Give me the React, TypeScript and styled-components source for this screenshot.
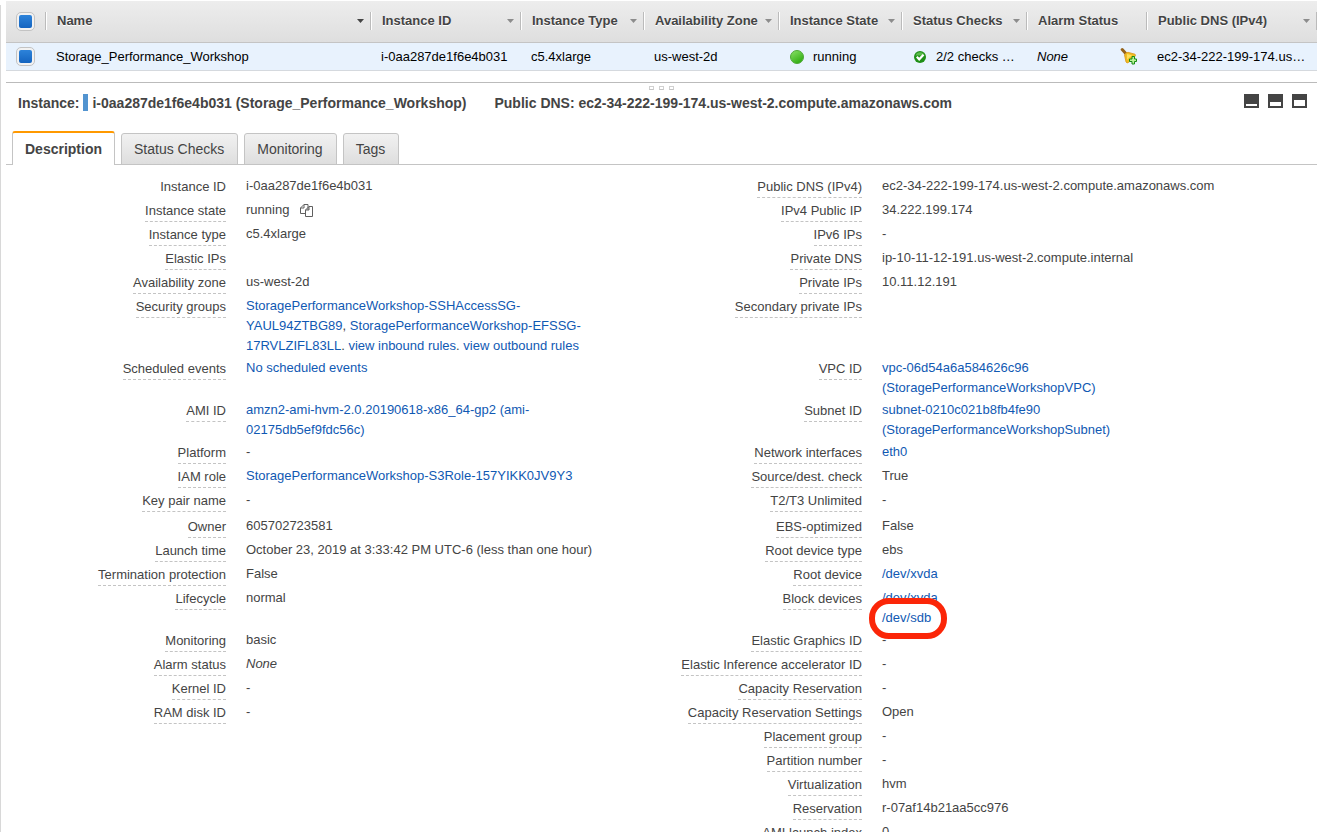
import React from "react";
import styled, { createGlobalStyle, css } from "styled-components";

const GlobalStyle = createGlobalStyle`
  * { box-sizing: border-box; }
  body {
    margin: 0;
    background: #fff;
    color: #444;
    font: 13px/20px "Liberation Sans", Arial, sans-serif;
  }
  button, input { font: inherit; color: inherit; }
`;

const Console = styled.main`
  position: relative;
  height: 100vh;
  overflow: hidden;
  padding: 1px 2px 0 6px;
  &::before {
    content: "";
    position: absolute;
    top: 5px;
    bottom: 0;
    left: 0;
    border-left: 1px solid #d8d8d8;
  }
`;

const InstanceTable = styled.table`
  width: 100%;
  table-layout: fixed;
  border-collapse: separate;
  border-spacing: 0;
`;

const Col = styled.col<{ $width?: number }>`
  ${(p) => p.$width && css`width: ${p.$width}px;`}
`;

const HeadRow = styled.tr`
  height: 42px;
  background: linear-gradient(#ededed, #dedede);
`;

const HeadCell = styled.th`
  padding: 0;
  border-bottom: 1px solid #c4c4c4;
  text-align: left;
  vertical-align: top;
`;

const HeadInner = styled.div`
  display: flex;
  align-items: center;
  height: 18px;
  margin-top: 11px;
  padding-left: 10px;
  border-right: 1px solid #bbb;
  box-shadow: 1px 0 #fff;
`;

const SortButton = styled.button`
  display: flex;
  flex: 1;
  align-items: center;
  justify-content: space-between;
  padding: 0 6px 0 1px;
  border: 0;
  background: none;
  font-weight: bold;
  line-height: 18px;
  text-align: left;
  text-shadow: 0 1px #fff;
  white-space: nowrap;
`;

const SelectedRow = styled.tr`
  height: 28px;
  background: #e8f2fd;
  color: #000;
`;

const Cell = styled.td<{ $italic?: boolean }>`
  padding: 0 10px;
  border-bottom: 1px solid #d5d9de;
  line-height: 26px;
  white-space: nowrap;
  overflow: hidden;
  text-overflow: ellipsis;
  font-style: ${(p) => (p.$italic ? "italic" : "normal")};
`;

const CellInner = styled.div<{ $gap?: number }>`
  display: flex;
  align-items: center;
  gap: ${(p) => p.$gap ?? 0}px;
  justify-content: ${(p) => (p.$gap ? "flex-start" : "space-between")};
`;

const CheckBox = styled.input`
  appearance: none;
  display: block;
  width: 19px;
  height: 19px;
  margin: 0;
  padding: 2px;
  border: 1px solid #c3c3c3;
  border-radius: 5px;
  background: linear-gradient(#f2f2f2, #f2f2f2) padding-box;
  &:checked {
    background:
      linear-gradient(#2d83da, #1464c0) content-box,
      linear-gradient(#f2f2f2, #f2f2f2) padding-box;
  }
`;

const Splitter = styled.div`
  display: flex;
  justify-content: center;
  gap: 5px;
  height: 10px;
  margin-top: 11px;
  padding-top: 3px;
  border-top: 1px solid #bbb;
`;

const Grip = styled.span`
  width: 5px;
  height: 4px;
  border: 1px solid #d0d0d0;
  border-bottom-color: #c4c4c4;
`;

const DetailHeader = styled.header`
  display: flex;
  align-items: center;
  padding: 1px 10px 0 12px;
  height: 20px;
`;

const Heading = styled.h2`
  display: flex;
  align-items: center;
  margin: 0;
  font-size: 14px;
  line-height: 20px;
  white-space: nowrap;
`;

const HeadingPart = styled.span`
  margin-right: 28px;
`;

const Marker = styled.span`
  width: 5px;
  height: 17px;
  margin: 0 4px;
  background: #5294d0;
`;

const LayoutButtons = styled.div`
  display: flex;
  align-self: flex-start;
  gap: 9px;
  margin-left: auto;
  padding-top: 1px;
`;

const IconButton = styled.button`
  display: block;
  padding: 0;
  border: 0;
  background: none;
  line-height: 0;
  & svg { display: block; }
`;

const Tabs = styled.div`
  display: flex;
  align-items: flex-end;
  gap: 6px;
  height: 34px;
  margin-top: 19px;
  padding-left: 6px;
  box-shadow: inset 0 -1px #c4c4c4;
`;

const Tab = styled.button<{ $active?: boolean }>`
  height: 32px;
  padding: 0 13px 0 12px;
  border: 1px solid #c4c4c4;
  border-radius: 3px 3px 0 0;
  background: linear-gradient(#f1f1f1, #dedede);
  font-size: 14px;
  line-height: 30px;
  ${(p) =>
    p.$active &&
    css`
      height: 34px;
      padding: 0 12px;
      border-top: 2px solid #f90;
      border-bottom: 0;
      background: #fff;
      font-weight: bold;
      line-height: 32px;
    `}
`;

const Details = styled.dl`
  display: grid;
  grid-template-columns: 220fr 396fr 240fr 455fr;
  margin: 0;
  padding-top: 11px;
`;

const Label = styled.dt<{ $side: "left" | "right"; $plain?: boolean }>`
  grid-column: ${(p) => (p.$side === "left" ? 1 : 3)};
  justify-self: end;
  align-self: start;
  margin: 1px 0 2px;
  border-bottom: 1px dashed ${(p) => (p.$plain ? "transparent" : "#c4c4c4")};
  white-space: nowrap;
`;

const Value = styled.dd<{ $side: "left" | "right"; $spaced?: boolean }>`
  grid-column: ${(p) => (p.$side === "left" ? 2 : 4)};
  max-width: 372px;
  margin: 0;
  padding: 0 0 ${(p) => (p.$spaced ? 6 : 2)}px 20px;
`;

const Link = styled.a`
  color: #1059b3;
  text-decoration: none;
`;

const Line = styled.div`
  display: flex;
  align-items: center;
  gap: 11px;
`;

const Circled = styled.span`
  position: relative;
  display: inline-block;
  &::after {
    content: "";
    position: absolute;
    z-index: 1;
    inset: -10px -16px -11px -13px;
    border: 6px solid #fb2608;
    border-radius: 20px;
    pointer-events: none;
  }
`;

const SortArrow = ({ dark }: { dark?: boolean }) => (
  <svg width="7" height="4" viewBox="0 0 7 4" aria-hidden="true">
    <path d="M0 0h7L3.5 4z" fill={dark ? "#444" : "#8c8c8c"} />
  </svg>
);

const RunningIcon = () => (
  <svg width="15" height="14" viewBox="0 0 15 14" aria-hidden="true">
    <defs>
      <linearGradient id="ball" x1="0" y1="0" x2="0.6" y2="1">
        <stop offset="0" stopColor="#8be36a" />
        <stop offset="1" stopColor="#31ad12" />
      </linearGradient>
    </defs>
    <circle cx="8" cy="7" r="6.5" fill="url(#ball)" stroke="#4fa838" />
  </svg>
);

const PassedIcon = () => (
  <svg width="14" height="12" viewBox="-2 0 14 12" aria-hidden="true">
    <circle cx="6" cy="6" r="6" fill="#1f8f17" />
    <path d="M1.500 4.500A4.800 4.800 0 0 1 10.500 4.500" fill="#5cbb4c" />
    <path d="M2.800 5.800l2.400 2.500L9.500 3.800" fill="none" stroke="#fff" strokeWidth="2.200" />
  </svg>
);

const BellIcon = () => (
  <svg width="17" height="17" viewBox="0 0 17 17" aria-hidden="true">
    <path d="M2.200 1.600l3.800 4.200" stroke="#94631c" strokeWidth="3" strokeLinecap="round" />
    <path d="M4.500 7Q5.500 4.500 8 4.300L15 6.200Q16 7 15 8.500L8.500 14.500Q7 15.500 6 14z" fill="#f1bd22" stroke="#d9971b" strokeWidth="0.8" />
    <path d="M7 6l5 1.200-5 4.500z" fill="#fbe15c" />
    <path d="M12 8.500h2.500v2.500h2v2.500h-2v2.500h-2.500v-2.500h-2.500v-2.500h2.500z" fill="#b9f296" stroke="#138a13" />
  </svg>
);

const CopyIcon = () => (
  <svg width="13" height="13" viewBox="0 0 13 13" fill="#fff" stroke="#606060" aria-hidden="true">
    <path d="M.5 4L4 .5h4v9H.5zM.5 4H4V.5" />
    <path d="M5.500 6L9 2.500h3.500v10h-7zM5.500 6H9V2.500" />
  </svg>
);

const PaneIcon = ({ top }: { top: number }) => (
  <svg width="15" height="14" viewBox="0 0 15 14" aria-hidden="true">
    <path fill="#444" d="M0 0h15v14H0z" />
    <path fill="#fff" d={`M2 ${top}h11V12H2z`} />
  </svg>
);

const columns: { name: string; width?: number; sort?: "active" | "idle" }[] = [
  { name: "Name", sort: "active" },
  { name: "Instance ID", width: 150, sort: "idle" },
  { name: "Instance Type", width: 123, sort: "idle" },
  { name: "Availability Zone", width: 135, sort: "idle" },
  { name: "Instance State", width: 123, sort: "idle" },
  { name: "Status Checks", width: 125, sort: "idle" },
  { name: "Alarm Status", width: 120 },
  { name: "Public DNS (IPv4)", width: 170, sort: "idle" },
];

const A = ({ children }: { children: React.ReactNode }) => <Link href="#">{children}</Link>;

type Field = [label: string, value: React.ReactNode];
type Row = { left?: Field; right?: Field; spaced?: boolean };

const rows: Row[] = [
  {
    left: ["Instance ID", "i-0aa287de1f6e4b031"],
    right: ["Public DNS (IPv4)", "ec2-34-222-199-174.us-west-2.compute.amazonaws.com"],
  },
  {
    left: [
      "Instance state",
      <Line>
        running
        <IconButton type="button" aria-label="Copy">
          <CopyIcon />
        </IconButton>
      </Line>,
    ],
    right: ["IPv4 Public IP", "34.222.199.174"],
  },
  { left: ["Instance type", "c5.4xlarge"], right: ["IPv6 IPs", "-"] },
  { left: ["Elastic IPs", ""], right: ["Private DNS", "ip-10-11-12-191.us-west-2.compute.internal"] },
  { left: ["Availability zone", "us-west-2d"], right: ["Private IPs", "10.11.12.191"] },
  {
    left: [
      "Security groups",
      <>
        <A>StoragePerformanceWorkshop-SSHAccessSG-YAUL94ZTBG89</A>,{" "}
        <A>StoragePerformanceWorkshop-EFSSG-17RVLZIFL83LL</A>. <A>view inbound rules</A>.{" "}
        <A>view outbound rules</A>
      </>,
    ],
    right: ["Secondary private IPs", ""],
  },
  {
    left: ["Scheduled events", <A>No scheduled events</A>],
    right: ["VPC ID", <A>vpc-06d54a6a584626c96 (StoragePerformanceWorkshopVPC)</A>],
  },
  {
    left: ["AMI ID", <A>amzn2-ami-hvm-2.0.20190618-x86_64-gp2 (ami-02175db5ef9fdc56c)</A>],
    right: ["Subnet ID", <A>subnet-0210c021b8fb4fe90 (StoragePerformanceWorkshopSubnet)</A>],
  },
  { left: ["Platform", "-"], right: ["Network interfaces", <A>eth0</A>] },
  {
    left: ["IAM role", <A>StoragePerformanceWorkshop-S3Role-157YIKK0JV9Y3</A>],
    right: ["Source/dest. check", "True"],
  },
  { left: ["Key pair name", "-"], right: ["T2/T3 Unlimited", "-"], spaced: true },
  { left: ["Owner", "605702723581"], right: ["EBS-optimized", "False"] },
  {
    left: ["Launch time", "October 23, 2019 at 3:33:42 PM UTC-6 (less than one hour)"],
    right: ["Root device type", "ebs"],
  },
  { left: ["Termination protection", "False"], right: ["Root device", <A>/dev/xvda</A>] },
  {
    left: ["Lifecycle", "normal"],
    right: [
      "Block devices",
      <>
        <A>/dev/xvda</A>
        <br />
        <Circled>
          <A>/dev/sdb</A>
        </Circled>
      </>,
    ],
  },
  { left: ["Monitoring", "basic"], right: ["Elastic Graphics ID", "-"] },
  { left: ["Alarm status", <em>None</em>], right: ["Elastic Inference accelerator ID", "-"] },
  { left: ["Kernel ID", "-"], right: ["Capacity Reservation", "-"] },
  { left: ["RAM disk ID", "-"], right: ["Capacity Reservation Settings", "Open"] },
  { right: ["Placement group", "-"] },
  { right: ["Partition number", "-"] },
  { right: ["Virtualization", "hvm"] },
  { right: ["Reservation", "r-07af14b21aa5cc976"] },
  { right: ["AMI launch index", "0"] },
];

const sides = ["left", "right"] as const;

export default function App() {
  return (
    <Console>
      <GlobalStyle />
      <InstanceTable>
        <colgroup>
          <Col $width={40} />
          {columns.map((c) => (
            <Col key={c.name} $width={c.width} />
          ))}
        </colgroup>
        <thead>
          <HeadRow>
            <HeadCell>
              <HeadInner>
                <CheckBox type="checkbox" defaultChecked aria-label="Select all instances" />
              </HeadInner>
            </HeadCell>
            {columns.map((c) => (
              <HeadCell key={c.name}>
                <HeadInner>
                  <SortButton type="button">
                    {c.name}
                    {c.sort && <SortArrow dark={c.sort === "active"} />}
                  </SortButton>
                </HeadInner>
              </HeadCell>
            ))}
          </HeadRow>
        </thead>
        <tbody>
          <SelectedRow>
            <Cell>
              <CheckBox type="checkbox" defaultChecked aria-label="Select Storage_Performance_Workshop" />
            </Cell>
            <Cell>Storage_Performance_Workshop</Cell>
            <Cell>i-0aa287de1f6e4b031</Cell>
            <Cell>c5.4xlarge</Cell>
            <Cell>us-west-2d</Cell>
            <Cell>
              <CellInner $gap={9}>
                <RunningIcon />
                running
              </CellInner>
            </Cell>
            <Cell>
              <CellInner $gap={10}>
                <PassedIcon />
                2/2 checks …
              </CellInner>
            </Cell>
            <Cell $italic>
              <CellInner>
                None
                <IconButton type="button" aria-label="Add alarm">
                  <BellIcon />
                </IconButton>
              </CellInner>
            </Cell>
            <Cell>ec2-34-222-199-174.us-west-2.compute.amazonaws.com</Cell>
          </SelectedRow>
        </tbody>
      </InstanceTable>

      <Splitter>
        <Grip />
        <Grip />
        <Grip />
      </Splitter>

      <DetailHeader>
        <Heading>
          Instance:
          <Marker />
          <HeadingPart>i-0aa287de1f6e4b031 (Storage_Performance_Workshop)</HeadingPart>
          <HeadingPart>Public DNS: ec2-34-222-199-174.us-west-2.compute.amazonaws.com</HeadingPart>
        </Heading>
        <LayoutButtons>
          <IconButton type="button" aria-label="Collapse pane">
            <PaneIcon top={10} />
          </IconButton>
          <IconButton type="button" aria-label="Split pane">
            <PaneIcon top={8} />
          </IconButton>
          <IconButton type="button" aria-label="Expand pane">
            <PaneIcon top={6} />
          </IconButton>
        </LayoutButtons>
      </DetailHeader>

      <Tabs role="tablist">
        <Tab type="button" role="tab" aria-selected="true" $active>
          Description
        </Tab>
        <Tab type="button" role="tab">Status Checks</Tab>
        <Tab type="button" role="tab">Monitoring</Tab>
        <Tab type="button" role="tab">Tags</Tab>
      </Tabs>

      <Details>
        {rows.map((row, i) =>
          sides.map((side) => {
            const field = row[side];
            return (
              field && (
                <React.Fragment key={side + i}>
                  <Label $side={side} $plain={field[0] === "Instance ID"}>
                    {field[0]}
                  </Label>
                  <Value $side={side} $spaced={row.spaced}>
                    {field[1]}
                  </Value>
                </React.Fragment>
              )
            );
          })
        )}
      </Details>
    </Console>
  );
}
